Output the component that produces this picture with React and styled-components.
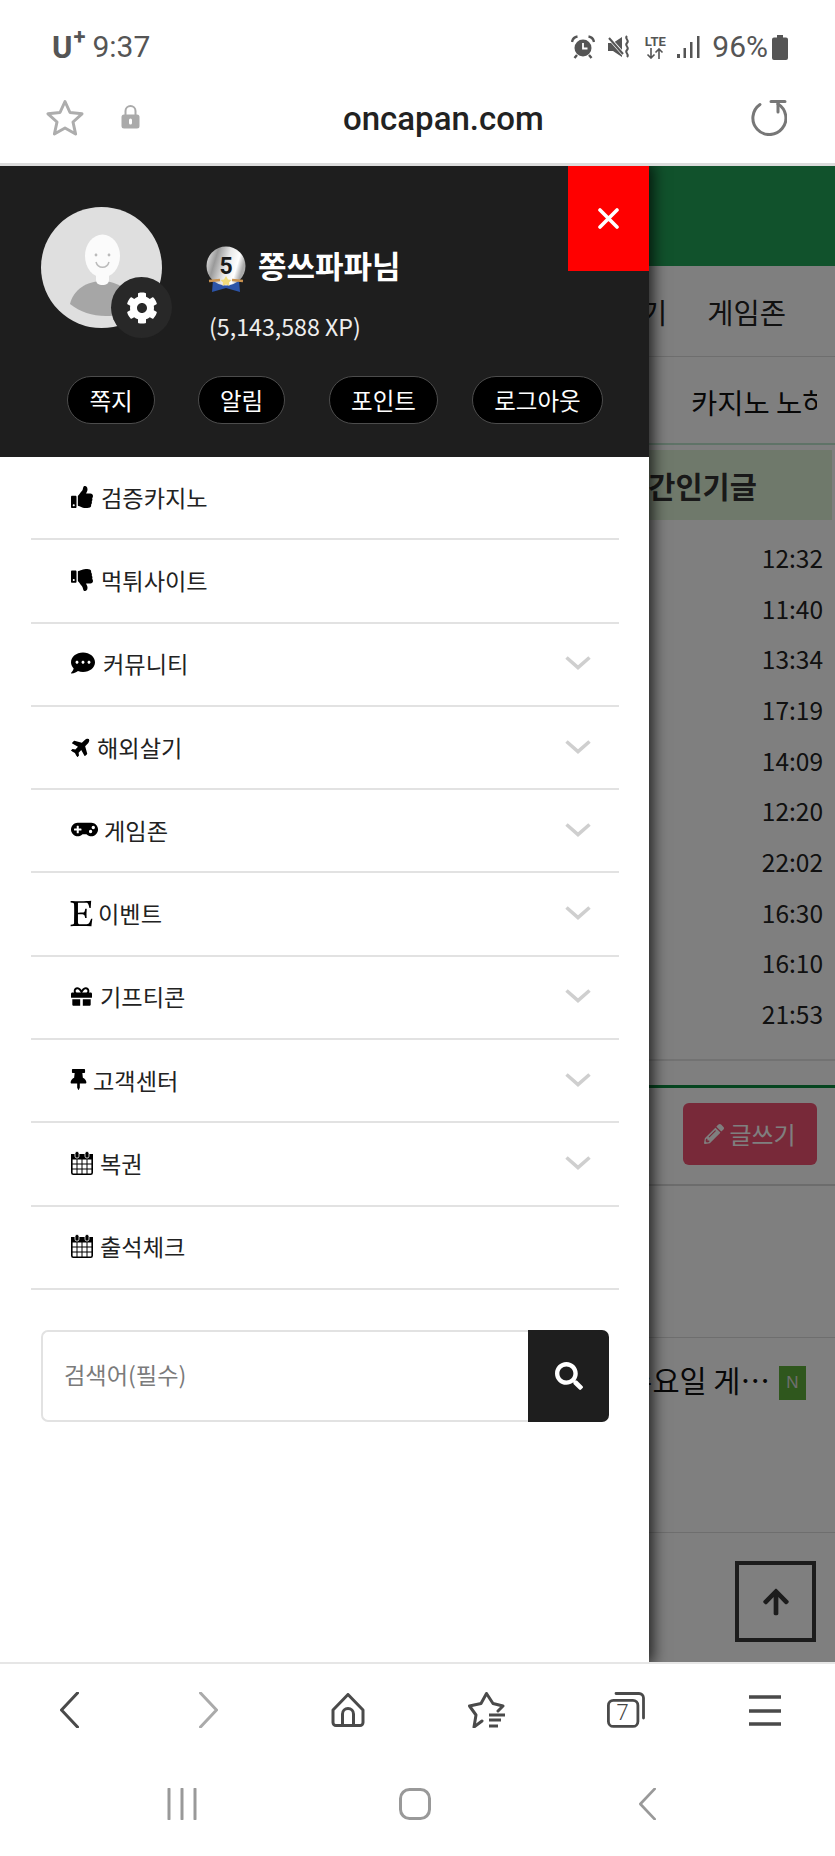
import React from "react";
import styled, { createGlobalStyle } from "styled-components";
import {
  FaThumbsUp, FaThumbsDown, FaCommentDots, FaPlane, FaGamepad, FaEtsy, FaGift,
  FaThumbtack, FaCog, FaSearch, FaPencilAlt, FaArrowUp,
} from "react-icons/fa";

const KR = `"Noto Sans CJK KR", "Noto Sans", sans-serif`;

const Global = createGlobalStyle`
  html, body { margin: 0; padding: 0; background: #fff; }
  * { box-sizing: border-box; }
  body { font-family: ${KR}; }
`;

const Phone = styled.div`
  width: 835px; height: 1856px; display: flex; flex-direction: column;
  background: #fff; overflow: hidden;
`;

/* status bar */
const StatusBar = styled.div`
  height: 70px; padding: 24px 47px 0 52px; display: flex; align-items: center;
  justify-content: space-between; color: #555; font-family: Roboto, sans-serif;
`;
const Carrier = styled.div`display: flex; align-items: center; gap: 7px; font-size: 30px; line-height: 1;`;
const CarrierLogo = styled.span`
  font-weight: 700; font-size: 31px; position: relative; padding-right: 13px; color: #555;
  sup { position: absolute; right: 0; top: -6px; font-size: 22px; line-height: 1; }
`;
const StatusIcons = styled.div`display: flex; align-items: center;`;
const Battery = styled.span`font-size: 30px; line-height: 1; margin: 0 4px 0 12px;`;
const LteWrap = styled.div`
  display: flex; flex-direction: column; align-items: center; width: 24px; margin: 0 10px 0 11px;
  font-size: 13px; font-weight: 700; line-height: 12px; color: #555;
`;

/* url bar */
const UrlBar = styled.div`
  height: 96px; display: flex; align-items: center; padding: 0 48px 0 46px;
  border-bottom: 3px solid #dcdcdc;
`;
const UrlText = styled.div`
  margin-left: 203px; font-family: Roboto, sans-serif; font-weight: 500; font-size: 33px;
  color: #222; padding-top: 4px;
`;
const UrlRight = styled.div`margin-left: auto; display: flex; padding-top: 3px;`;
const LockWrap = styled.div`margin-left: 37px; display: flex;`;
const StarWrap = styled.div`display: flex; padding-top: 2px;`;

/* main */
const Main = styled.div`position: relative; height: 1496px; overflow: hidden; background: #fff;`;
const Behind = styled.div`display: flex; flex-direction: column; height: 100%;`;
const GreenBar = styled.div`height: 100px; background: #22a458;`;
const NavRow = styled.div`
  height: 91px; display: flex; justify-content: flex-end; align-items: center; gap: 40px;
  padding-right: 49px; font-size: 28.500px; color: #222; white-space: nowrap;
  border-bottom: 1px solid #ddd;
`;
const SubRow = styled.div`
  height: 88px; display: flex; align-items: center; padding: 2px 0 0 691px; font-size: 28.500px; color: #111;
  border-bottom: 2px solid #bfe6cf; white-space: nowrap;
`;
const SubClip = styled.div`width: 126px; overflow: hidden;`;
const PopularBox = styled.div`
  height: 70px; margin: 5px 3px 0 0; padding-left: 594px; display: flex; align-items: center;
  background: #dff2d6; font-size: 29.500px; font-weight: 700; color: #333; white-space: nowrap;
`;
const TimeList = styled.div`
  padding: 12px 12px 20px 0; border-bottom: 2px solid #e4e4e4; display: flex; flex-direction: column;
`;
const Time = styled.div`
  height: 50.7px; display: flex; align-items: center; justify-content: flex-end;
  font-size: 24.5px; color: #222;
`;
const GreenLine = styled.div`margin-top: 24px; height: 3px; background: #0b8a3e;`;
const WriteRow = styled.div`
  height: 98px; padding-right: 18px; display: flex; justify-content: flex-end; align-items: flex-start;
  padding-top: 15px; border-bottom: 2px solid #d8d8d8;
`;
const WriteButton = styled.button`
  width: 134px; height: 62px; border: 0; border-radius: 6px; background: #f05272; color: #fff;
  font: 400 24px ${KR}; display: flex; align-items: center; justify-content: center; gap: 5px; padding: 0;
`;
const EmptyRow = styled.div`height: 152px; border-bottom: 1px solid #ddd;`;
const PostRow = styled.div`
  height: 195px; padding: 28px 29px 0 0; display: flex; justify-content: flex-end; align-items: flex-start;
  gap: 9px; border-bottom: 1px solid #ddd; font-size: 29.500px; color: #111; white-space: nowrap; line-height: 26px;
`;
const NewBadge = styled.span`
  width: 27px; height: 34px; background: #5fae3a; color: #ddd; display: flex; align-items: center;
  justify-content: center; font: 400 17px "Liberation Sans", sans-serif;
`;
const Overlay = styled.div`position: absolute; inset: 0; background: rgba(0, 0, 0, 0.5);`;
const UpButton = styled.div`
  position: absolute; right: 19px; bottom: 20px; width: 81px; height: 81px; border: 4px solid #1c1c1c;
  display: flex; align-items: center; justify-content: center; color: #1c1c1c;
`;

/* drawer */
const Drawer = styled.aside`
  position: absolute; left: 0; top: 0; bottom: 0; width: 649px; background: #fff; display: flex;
  flex-direction: column; box-shadow: 2px 0 14px 2px rgba(0, 0, 0, 0.75);
`;
const DrawerHead = styled.div`
  position: relative; height: 291px; background: #1e1e1e; padding: 41px 0 0 41px; color: #fff;
`;
const CloseButton = styled.button`
  position: absolute; right: 0; top: 0; width: 81px; height: 105px; border: 0; background: #ff0000; color: #fff;
  display: flex; align-items: center; justify-content: center; padding: 0;
`;
const Profile = styled.div`display: flex; align-items: flex-start; height: 169px;`;
const Avatar = styled.div`position: relative; width: 121px; height: 121px;`;
const GearBadge = styled.div`
  position: absolute; left: 70px; top: 70px; width: 61px; height: 61px; border-radius: 50%;
  background: #282828; display: flex; align-items: center; justify-content: center; color: #fff;
`;
const UserInfo = styled.div`margin-left: 44px; padding-top: 39px; display: flex; flex-direction: column;`;
const NameRow = styled.div`display: flex; align-items: center; gap: 12px; height: 46px;`;
const Name = styled.div`font-size: 31px; font-weight: 700; line-height: 1; margin-top: -9px;`;
const Xp = styled.div`font-size: 23.2px; line-height: 30px; margin: 19px 0 0 3px; color: #eee;`;
const Pills = styled.div`display: flex; margin-left: 26px;`;
const Pill = styled.button`
  width: ${(p) => p.$w}px; height: 48px; margin-left: ${(p) => p.$ml}px; border-radius: 24px;
  background: #000; border: 1px solid #4c4c4c; color: #fff; font: 400 23.5px ${KR}; padding: 0;
  display: flex; align-items: center; justify-content: center;
`;
const Menu = styled.nav`display: flex; flex-direction: column; padding: 0 30px 0 31px;`;
const MenuRow = styled.div`
  height: 83.3px; border-bottom: 2px solid #e2e2e2; display: flex; align-items: center;
  padding: 0 28px 2px 40px; color: #222; font-size: 23.2px;
`;
const MenuIcon = styled.span`
  display: flex; color: #000; margin-right: ${(p) => p.$gap ?? 8}px; margin-left: ${(p) => p.$pull ?? 0}px;
`;
const Chevron = styled.span`margin-left: auto; display: flex;`;
const SearchBar = styled.form`margin: 40px 40px 0 41px; height: 92px; display: flex;`;
const SearchInput = styled.input`
  flex: 1; min-width: 0; border: 2px solid #e2e2e2; border-right: 0; border-radius: 7px 0 0 7px; outline: 0;
  padding: 0 0 3px 21px; font: 400 23.2px ${KR}; color: #222; background: #fff;
  &::placeholder { color: #7b7b7b; opacity: 1; }
`;
const SearchButton = styled.button`
  width: 81px; border: 0; border-radius: 0 7px 7px 0; background: #1e1e1e; color: #fff; display: flex;
  align-items: center; justify-content: center; padding: 0;
`;
const PlaneIcon = styled(FaPlane)`transform: rotate(-45deg);`;

/* browser toolbar + system nav */
const Toolbar = styled.div`
  height: 96px; border-top: 2px solid #e6e6e6; display: grid; grid-template-columns: repeat(6, 139px);
  justify-items: center; align-items: center; padding-bottom: 2px;
`;
const TabCount = styled.div`position: relative; width: 38px; height: 36px; display: flex;`;
const TabNumber = styled.span`
  position: absolute; left: 0; top: 8px; width: 32px; text-align: center; font: 300 22px Roboto, sans-serif;
  color: #444; line-height: 26px;
`;
const SysNav = styled.div`
  height: 96px; display: grid; grid-template-columns: repeat(3, 233px); padding: 0 0 4px 65px;
  justify-items: center; align-items: center;
`;

/* drawings */
const AlarmIcon = () => (
  <svg width="24" height="24" viewBox="0 0 24 24">
    <circle cx="12" cy="13" r="8.5" fill="#555" />
    <path d="M12 8v5.5h4.5" fill="none" stroke="#fff" strokeWidth="1.8" />
    <path d="M1 7c.5-3 2.5-5 5.5-5.5M23 7c-.5-3-2.5-5-5.5-5.5" fill="none" stroke="#555" strokeWidth="2.4" />
    <path d="M6 20l-2.5 3M18 20l2.5 3" stroke="#555" strokeWidth="2.4" />
  </svg>
);
const MuteIcon = () => (
  <svg width="24" height="24" viewBox="0 0 24 24" style={{ marginLeft: 13 }}>
    <path d="M0 8h5l9-6v20l-9-6H0z" fill="#555" />
    <path d="M1 3l16 18" stroke="#fff" strokeWidth="3.6" />
    <path d="M1 3l14 16" stroke="#555" strokeWidth="2" />
    <path d="M19 1c-3 3 3 4 0 7s3 4 0 7 3 4 0 7" fill="none" stroke="#555" strokeWidth="2" />
  </svg>
);
const LteArrows = () => (
  <svg width="20" height="11" viewBox="0 0 20 11">
    <path d="M6 0v10M2.5 6.500L6 10l3.500-3.500M14 11V1M10.500 4.500L14 1l3.500 3.500" fill="none" stroke="#555" strokeWidth="1.6" />
  </svg>
);
const SignalIcon = () => (
  <svg width="23" height="22" viewBox="0 0 23 22">
    <rect x="0" y="18" width="3" height="4" fill="#555" />
    <rect x="6.500" y="12" width="2.500" height="10" fill="#555" />
    <rect x="13" y="6" width="2.500" height="16" fill="#555" />
    <rect x="20" y="0" width="2.500" height="22" fill="#555" />
  </svg>
);
const BatteryIcon = () => (
  <svg width="16" height="25" viewBox="0 0 16 25">
    <path d="M5 0h6v2.500h3a2 2 0 0 1 2 2V23a2 2 0 0 1-2 2H2a2 2 0 0 1-2-2V4.500a2 2 0 0 1 2-2h3z" fill="#555" />
  </svg>
);
const FavStar = () => (
  <svg width="38" height="38" viewBox="0 0 38 38">
    <path d="M19 2.500l5 11 12 1.300-9 8.200 2.600 12L19 29l-10.600 6 2.600-12-9-8.200 12-1.300z" fill="none" stroke="#adadad" strokeWidth="3" strokeLinejoin="round" />
  </svg>
);
const LockIcon = () => (
  <svg width="19" height="24" viewBox="0 0 19 24">
    <path d="M4.500 11V6a5 5 0 0 1 10 0v5" fill="none" stroke="#aaa" strokeWidth="2" />
    <rect x="0.500" y="9.500" width="18" height="14" rx="2.500" fill="#aaa" />
    <rect x="8" y="13.500" width="3" height="6" rx="1.500" fill="#fff" />
  </svg>
);
const ReloadIcon = () => (
  <svg width="36" height="36" viewBox="0 0 36 36">
    <path d="M9 4.500A16.500 16.500 0 1 0 27 4" fill="none" stroke="#777" strokeWidth="3" strokeLinecap="round" />
    <path d="M20 1.500h14M27 3v9" fill="none" stroke="#777" strokeWidth="3" strokeLinecap="round" />
  </svg>
);
const CloseIcon = () => (
  <svg width="21" height="21" viewBox="0 0 21 21">
    <path d="M2 2l17 17M19 2L2 19" stroke="#fff" strokeWidth="3.600" strokeLinecap="round" />
  </svg>
);
const AvatarArt = () => (
  <svg width="121" height="121" viewBox="0 0 121 121">
    <defs>
      <clipPath id="av"><circle cx="60.500" cy="60.500" r="60.500" /></clipPath>
    </defs>
    <circle cx="60.500" cy="60.500" r="60.500" fill="#dfdfdf" />
    <g clipPath="url(#av)">
      <path d="M29 97c3-14 17-23 32-23s30 9 34 27c-9 6-19 8-30 8-14 0-26-4-36-12z" fill="#a6a6a6" />
      <rect x="55" y="62" width="13" height="16" rx="5" fill="#fbfbfb" />
      <ellipse cx="61.500" cy="49" rx="17.500" ry="21.500" fill="#fbfbfb" />
      <circle cx="55" cy="48" r="1.400" fill="#bbb" />
      <circle cx="68" cy="48" r="1.400" fill="#bbb" />
      <path d="M55 55c2 7 11 7 13 0" fill="none" stroke="#bbb" strokeWidth="1.500" />
    </g>
  </svg>
);
const Medal = () => (
  <svg width="40" height="46" viewBox="0 0 40 46">
    <defs>
      <linearGradient id="sv" x1="0" x2="1" y1="0" y2="0.300">
        <stop offset="0" stopColor="#f4f4f4" />
        <stop offset="0.300" stopColor="#9a9a9a" />
        <stop offset="0.600" stopColor="#e8e8e8" />
        <stop offset="0.850" stopColor="#ffffff" />
        <stop offset="1" stopColor="#aaa" />
      </linearGradient>
    </defs>
    <path d="M7 34h26l1 12-14-4-14 4z" fill="#2c54a8" />
    <circle cx="20" cy="20" r="19.500" fill="url(#sv)" />
    <text x="20" y="28" textAnchor="middle" fontFamily="Roboto, sans-serif" fontWeight="700" fontSize="23" fill="#1a1a1a">5</text>
    <path d="M3 35l11-1M37 35l-11-1" stroke="#c9924f" strokeWidth="2.500" />
    <path d="M20 30l2 3.500 3.500.5-2.500 2.500.5 3.500-3.500-1.500-3.500 1.500.5-3.500-2.500-2.500 3.500-.5z" fill="#f3dc7a" />
  </svg>
);
const CalendarIcon = () => (
  <svg width="22" height="24" viewBox="0 0 22 24">
    <rect x="0.800" y="3.800" width="20.400" height="19.400" rx="1.500" fill="#fff" stroke="#000" strokeWidth="1.600" />
    <rect x="0" y="3" width="22" height="5.500" fill="#000" />
    <path d="M1 13h20M1 18h20M6 8v15M11 8v15M16 8v15" stroke="#000" strokeWidth="1" />
    <rect x="4" y="0.500" width="4" height="6.500" rx="1.800" fill="#000" stroke="#fff" strokeWidth="0.800" />
    <rect x="14" y="0.500" width="4" height="6.500" rx="1.800" fill="#000" stroke="#fff" strokeWidth="0.800" />
  </svg>
);
const ChevronIcon = () => (
  <svg width="26" height="14" viewBox="0 0 26 14">
    <path d="M1.500 1.500L13 11.500 24.500 1.500" fill="none" stroke="#cfcfcf" strokeWidth="3.600" />
  </svg>
);
const Chev = ({ flip, color, h = 36, w = 19, sw = 3 }) => (
  <svg width={w} height={h} viewBox="0 0 19 36" preserveAspectRatio="none">
    <path d={flip ? "M1.500 1l16 17-16 17" : "M17.500 1L1.500 18l16 17"} fill="none" stroke={color} strokeWidth={sw} strokeLinecap="round" strokeLinejoin="round" />
  </svg>
);
const HomeIcon = () => (
  <svg width="34" height="34" viewBox="0 0 34 34">
    <path d="M17 1.500L32 17v12.500a3 3 0 0 1-3 3H5a3 3 0 0 1-3-3V17z" fill="none" stroke="#4a4a4a" strokeWidth="3" strokeLinejoin="round" />
    <path d="M11.500 32V21a5.500 5.500 0 0 1 11 0v11" fill="none" stroke="#4a4a4a" strokeWidth="3" />
  </svg>
);
const StarListIcon = () => (
  <svg width="38" height="36" viewBox="0 0 38 36">
    <path d="M30 19l5-5-10-2.500L18.500 1.500 13 11.500 1.500 14l6.500 9-2 12 8-6" fill="none" stroke="#4a4a4a" strokeWidth="3" strokeLinecap="round" strokeLinejoin="round" />
    <path d="M21 23h16M21 28h12M21 34h9" stroke="#4a4a4a" strokeWidth="3" />
  </svg>
);
const TabFrame = () => (
  <svg width="38" height="36" viewBox="0 0 38 36">
    <rect x="1.400" y="8.400" width="29.500" height="26" rx="5" fill="none" stroke="#4a4a4a" strokeWidth="2.800" />
    <path d="M9 1.500h23a4.500 4.500 0 0 1 4.500 4.500V26" fill="none" stroke="#4a4a4a" strokeWidth="2.800" strokeLinecap="round" />
  </svg>
);
const HamburgerIcon = () => (
  <svg width="32" height="32" viewBox="0 0 32 32">
    <path d="M0 3h32M0 17h32M0 30h32" stroke="#4a4a4a" strokeWidth="3.400" />
  </svg>
);
const RecentsIcon = () => (
  <svg width="30" height="32" viewBox="0 0 30 32">
    <path d="M2 1v30M15 1v30M28 1v30" stroke="#999" strokeWidth="3" strokeLinecap="round" />
  </svg>
);
const HomeNavIcon = () => (
  <svg width="32" height="32" viewBox="0 0 32 32">
    <rect x="1.500" y="1.500" width="29" height="29" rx="9" fill="none" stroke="#999" strokeWidth="3" />
  </svg>
);

const items = [
  { label: "검증카지노", icon: <FaThumbsUp size={22} /> },
  { label: "먹튀사이트", icon: <FaThumbsDown size={22} /> },
  { label: "커뮤니티", icon: <FaCommentDots size={24} />, more: true },
  { label: "해외살기", icon: <PlaneIcon size={21} />, gap: 5, more: true },
  { label: "게임존", icon: <FaGamepad size={27} />, gap: 6, more: true },
  { label: "이벤트", icon: <FaEtsy size={29} />, gap: 2, pull: -4, more: true },
  { label: "기프티콘", icon: <FaGift size={21} />, more: true },
  { label: "고객센터", icon: <FaThumbtack size={21} />, gap: 4, pull: -3, more: true },
  { label: "복권", icon: <CalendarIcon />, gap: 7, more: true },
  { label: "출석체크", icon: <CalendarIcon />, gap: 7 },
];
const pills = [
  { label: "쪽지", w: 88, ml: 0 },
  { label: "알림", w: 87, ml: 43 },
  { label: "포인트", w: 109, ml: 44 },
  { label: "로그아웃", w: 131, ml: 34 },
];
const times = ["12:32", "11:40", "13:34", "17:19", "14:09", "12:20", "22:02", "16:30", "16:10", "21:53"];

export default function App() {
  return (
    <Phone>
      <Global />
      <StatusBar>
        <Carrier>
          <CarrierLogo>U<sup>+</sup></CarrierLogo>
          <span>9:37</span>
        </Carrier>
        <StatusIcons>
          <AlarmIcon />
          <MuteIcon />
          <LteWrap>LTE<LteArrows /></LteWrap>
          <SignalIcon />
          <Battery>96%</Battery>
          <BatteryIcon />
        </StatusIcons>
      </StatusBar>
      <UrlBar>
        <StarWrap><FavStar /></StarWrap>
        <LockWrap><LockIcon /></LockWrap>
        <UrlText>oncapan.com</UrlText>
        <UrlRight><ReloadIcon /></UrlRight>
      </UrlBar>
      <Main>
        <Behind>
          <GreenBar />
          <NavRow><span>해외살기</span><span>게임존</span></NavRow>
          <SubRow><SubClip>카지노 노하우</SubClip></SubRow>
          <PopularBox>실시간인기글</PopularBox>
          <TimeList>
            {times.map((t) => <Time key={t}>{t}</Time>)}
          </TimeList>
          <GreenLine />
          <WriteRow>
            <WriteButton><FaPencilAlt size={20} />글쓰기</WriteButton>
          </WriteRow>
          <EmptyRow />
          <PostRow><span>이번주 수요일 게⋯</span><NewBadge>N</NewBadge></PostRow>
        </Behind>
        <Overlay />
        <UpButton><FaArrowUp size={30} /></UpButton>
        <Drawer>
          <DrawerHead>
            <CloseButton aria-label="닫기"><CloseIcon /></CloseButton>
            <Profile>
              <Avatar>
                <AvatarArt />
                <GearBadge><FaCog size={32} /></GearBadge>
              </Avatar>
              <UserInfo>
                <NameRow><Medal /><Name>쫑쓰파파님</Name></NameRow>
                <Xp>(5,143,588 XP)</Xp>
              </UserInfo>
            </Profile>
            <Pills>
              {pills.map((p) => <Pill key={p.label} $w={p.w} $ml={p.ml}>{p.label}</Pill>)}
            </Pills>
          </DrawerHead>
          <Menu>
            {items.map((it) => (
              <MenuRow key={it.label}>
                <MenuIcon $gap={it.gap} $pull={it.pull}>{it.icon}</MenuIcon>
                {it.label}
                {it.more && <Chevron><ChevronIcon /></Chevron>}
              </MenuRow>
            ))}
          </Menu>
          <SearchBar onSubmit={(e) => e.preventDefault()}>
            <SearchInput placeholder="검색어(필수)" />
            <SearchButton aria-label="검색"><FaSearch size={28} /></SearchButton>
          </SearchBar>
        </Drawer>
      </Main>
      <Toolbar>
        <Chev color="#4a4a4a" />
        <Chev flip color="#aaa" />
        <HomeIcon />
        <StarListIcon />
        <TabCount><TabFrame /><TabNumber>7</TabNumber></TabCount>
        <HamburgerIcon />
      </Toolbar>
      <SysNav>
        <RecentsIcon />
        <HomeNavIcon />
        <Chev color="#999" w={17} h={32} />
      </SysNav>
    </Phone>
  );
}
